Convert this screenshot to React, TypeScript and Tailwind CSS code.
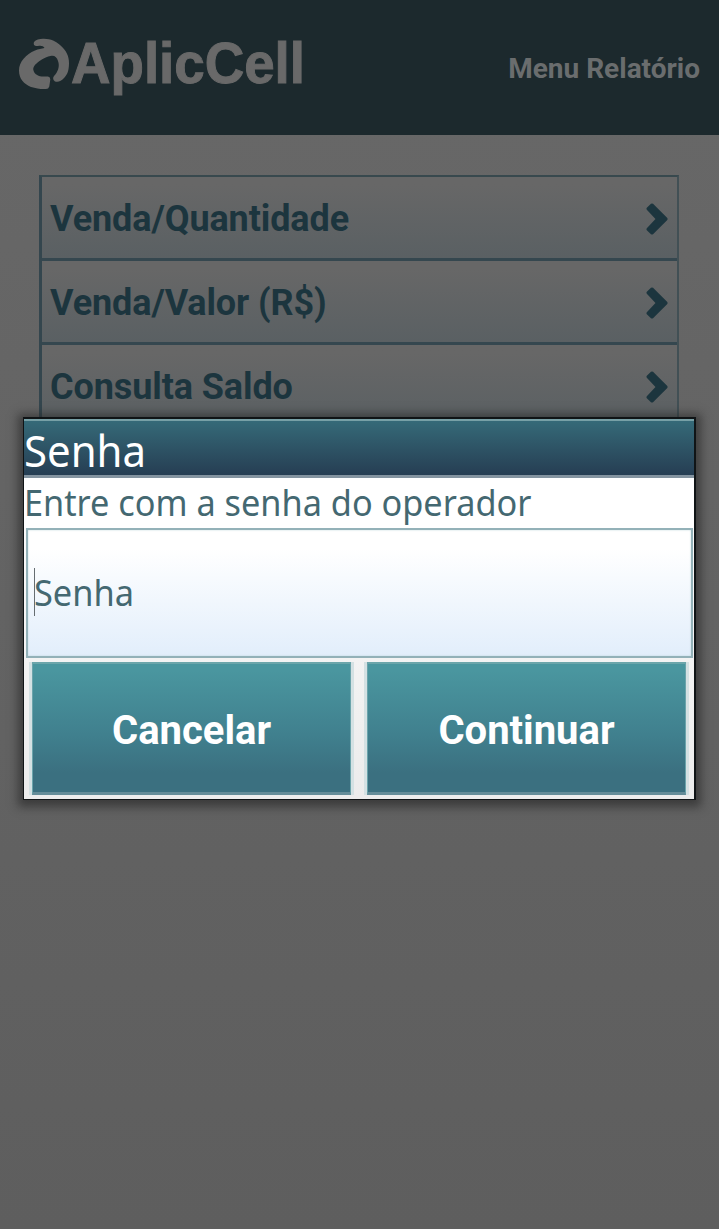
const items = ["Venda/Quantidade", "Venda/Valor (R$)", "Consulta Saldo"];

function Logo() {
  return (
    <svg width="310" height="80" viewBox="0 0 310 80" className="block overflow-visible" role="img" aria-label="AplicCell">
      <g fill="#696969">
        <path d="M34 22 C36 19 40 18.600 44 18.700 C51 19 56 21 60 25 C66 30 69 36 69 43 C69 49 68 54 64.500 57.500 C61 61.500 58 62.500 55 61.500 C53 60 52.500 58 54 56 C58 52 60 46 58 41 C57 37.500 55 35.500 51.500 35.800 C47 36.500 43 38.500 39.500 41 C35 44.500 32.500 47 33.500 50.500 C34.500 54.500 39 56.500 43 56.500 L48 56.500 Q50.500 57 50.300 59.500 L49.300 66.500 Q48.500 69 46 69 C41 69.300 36 68.500 31 67 C24 64 19 59 19 50.500 C19 42 26 34 35 30.500 C38.500 29 41.500 28.500 44.500 28 C43.500 26 41 25.300 38 26 C35 26.500 33 25 34 22 Z" />
        <text
          x="71"
          y="62.500"
          fontFamily="'Liberation Sans', Arial, sans-serif"
          fontWeight="700"
          fontSize="58"
          textLength="234"
          lengthAdjust="spacingAndGlyphs"
          stroke="#696969"
          strokeWidth="1"
        >
          AplicCell
        </text>
      </g>
    </svg>
  );
}

function Chevron() {
  return (
    <svg width="22" height="32" viewBox="0 0 22 32" className="mt-[2px] block">
      <path d="M7 .8 L21.300 15 Q22 16 21.300 17 L7 31.200 Q6 32 5 31.200 L.8 27.300 Q0 26.200 .8 25.200 L9.500 16 L.8 6.800 Q0 5.800 .8 4.700 L5 .8 Q6 0 7 .8 Z" fill="#1c353e" />
    </svg>
  );
}

function Action({ label }: { label: string }) {
  return (
    <button className="h-[133px] w-[319px] border-x border-t-2 border-b-3 border-x-[#6ba4ab] border-t-[#6ba5aa] border-b-[#648c98] bg-linear-to-b from-[#4a969f] from-5% via-[#40808e] via-55% to-[#3b7080] to-85% pt-[5px] font-[Roboto,sans-serif] text-[40px] leading-none font-bold text-white shadow-[-3px_0_0_#d4e1e3,3px_0_0_#d4e1e3]">
      {label}
    </button>
  );
}

export default function App() {
  return (
    <div className="relative h-[1229px] w-[719px] overflow-hidden bg-linear-to-b from-[#686868] to-[#5e5e5e]">
      <header className="flex h-[135px] items-start justify-between bg-[#1c292d] pt-5 pr-[19px]">
        <Logo />
        <h1 className="mt-[33px] font-[Roboto,sans-serif] text-[28px] leading-8 font-bold whitespace-nowrap text-[#6a6d6e]">Menu Relatório</h1>
      </header>

      <ul className="mx-[39px] mt-10 mr-10 border-t-2 border-r-2 border-l-3 border-t-[#38494e] border-r-[#425055] border-l-[#34464e]">
        {items.map((item) => (
          <li key={item} className="flex h-[84px] items-center justify-between border-b-3 border-[#35474f] bg-linear-to-b from-[#676767] from-10% to-[#5a6063] pr-[9px] pl-2">
            <span className="mt-[2px] font-[Roboto,sans-serif] text-[36px] leading-none font-bold tracking-[-0.1px] whitespace-nowrap text-[#1c353e]">{item}</span>
            <Chevron />
          </li>
        ))}
      </ul>

      <section role="dialog" className="absolute top-[417px] left-[23px] h-[383px] w-[673px] border border-t-2 border-r-2 border-[#101416] bg-linear-to-b from-white to-[#ececec] shadow-[0_2px_9px_5px_rgba(35,35,35,.6)]">
        <h2 className="flex h-[59px] items-center border-t-2 border-b-3 border-t-[#77a0a6] border-b-[#8494a0] bg-linear-to-b from-[#356a78] to-[#263e53] font-['Noto_Sans',sans-serif] text-[44px] leading-none text-white">
          <span className="mt-[3px] origin-left scale-x-[.953] whitespace-nowrap">Senha</span>
        </h2>
        <p className="flex h-[50px] items-center bg-white font-['Noto_Sans',sans-serif] text-[36px] leading-none whitespace-nowrap text-[#446871]">
          <span className="origin-left scale-x-[.952]">Entre com a senha do operador</span>
        </p>
        <div className="ml-[2px] flex h-[130px] w-[667px] items-center border-2 border-[#93b1b8] bg-linear-to-b from-white from-15% to-[#e2eefb] pl-[6px] shadow-[inset_0_0_2px_#bad4d8]">
          <span className="-mt-[2px] h-12 w-px bg-[#666d71]" />
          <span className="-ml-px origin-left scale-x-[.955] font-['Noto_Sans',sans-serif] text-[36px] leading-none text-[#446871]">Senha</span>
        </div>
        <div className="flex gap-[16px] pt-1 pl-[8px]">
          <Action label="Cancelar" />
          <Action label="Continuar" />
        </div>
      </section>
    </div>
  );
}
